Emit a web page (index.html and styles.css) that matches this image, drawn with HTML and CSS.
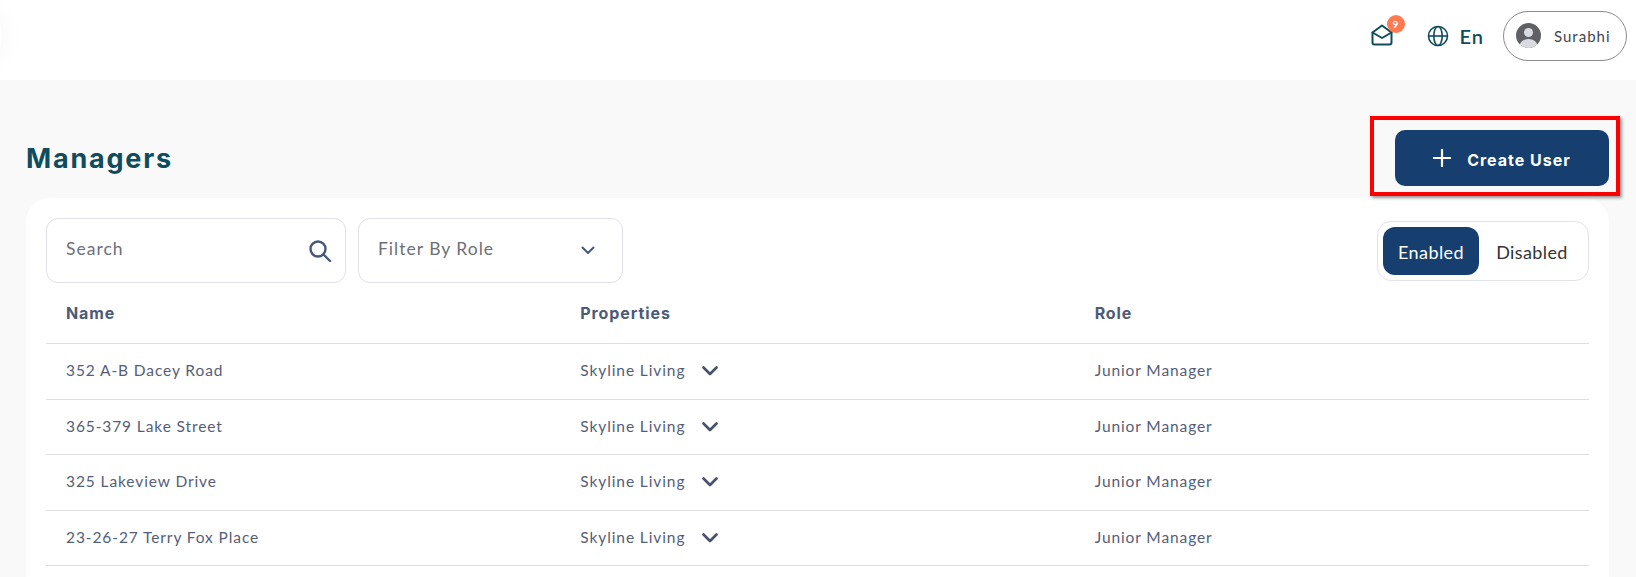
FILE: index.html
```html
<!DOCTYPE html>
<html lang="en">
<head>
<meta charset="UTF-8">
<meta name="viewport" content="width=device-width, initial-scale=1.0">
<title>Managers</title>
<link rel="stylesheet" href="styles.css">
</head>
<body>
<header class="topbar">
    <div class="logo-glow"></div>
    <div class="mail">
        <svg width="22" height="22" viewBox="0 0 22 22" fill="none" stroke="#0f4c5c" stroke-width="2" stroke-linejoin="round" stroke-linecap="round">
            <path d="M1.500 8.500 L11 1.500 L20.500 8.500 V18.500 a2 2 0 0 1 -2 2 H3.500 a2 2 0 0 1 -2 -2 Z"/>
            <path d="M1.500 8.500 L11 14 L20.500 8.500"/>
        </svg>
        <span class="badge">9</span>
    </div>
    <div class="lang">
        <svg width="22" height="22" viewBox="0 0 22 22" fill="none" stroke="#0f4c5c" stroke-width="1.600">
            <circle cx="11" cy="11" r="9.500"/>
            <ellipse cx="11" cy="11" rx="4.200" ry="9.500"/>
            <path d="M1.500 11 H20.500"/>
        </svg>
        <span>En</span>
    </div>
    <div class="user-pill">
        <svg width="25" height="25" viewBox="0 0 25 25">
            <defs><clipPath id="avatarClip"><circle cx="12.500" cy="12.500" r="12.500"/></clipPath></defs>
            <circle cx="12.500" cy="12.500" r="12.500" fill="#5f6065"/>
            <g clip-path="url(#avatarClip)" fill="#d8dbe2">
                <circle cx="12.500" cy="9.500" r="4.500"/>
                <ellipse cx="12.500" cy="23" rx="9" ry="7"/>
            </g>
        </svg>
        <span>Surabhi</span>
    </div>
</header>

<main class="content">
    <div class="title-row">
        <h1>Managers</h1>
        <button class="create-btn">
            <svg width="18" height="18" viewBox="0 0 18 18" stroke="#fff" stroke-width="2.200"><path d="M9 0 V18 M0 9 H18"/></svg>
            <span>Create User</span>
        </button>
        <div class="highlight"></div>
    </div>

    <section class="card">
        <div class="filters">
            <div class="field search">
                <span>Search</span>
                <svg width="24" height="24" viewBox="0 0 24 24" fill="none" stroke="#46587a" stroke-width="2.400" stroke-linecap="round"><circle cx="10" cy="10" r="7.500"/><path d="M15.500 15.500 L22 22"/></svg>
            </div>
            <div class="field role">
                <span>Filter By Role</span>
                <svg width="14" height="9" viewBox="0 0 14 9" fill="none" stroke="#46587a" stroke-width="2" stroke-linecap="round" stroke-linejoin="round"><path d="M1.500 1.500 L7 7 L12.500 1.500"/></svg>
            </div>
            <div class="toggle">
                <span class="toggle-on">Enabled</span>
                <span class="toggle-off">Disabled</span>
            </div>
        </div>

        <table class="managers">
            <thead>
                <tr><th>Name</th><th>Properties</th><th>Role</th></tr>
            </thead>
            <tbody>
                <tr>
                    <td>352 A-B Dacey Road</td>
                    <td><span class="prop">Skyline Living <svg width="16" height="10" viewBox="0 0 16 10" fill="none" stroke="#46506c" stroke-width="2.600" stroke-linecap="round" stroke-linejoin="round"><path d="M1.500 1.500 L8 8 L14.500 1.500"/></svg></span></td>
                    <td>Junior Manager</td>
                </tr>
                <tr>
                    <td>365-379 Lake Street</td>
                    <td><span class="prop">Skyline Living <svg width="16" height="10" viewBox="0 0 16 10" fill="none" stroke="#46506c" stroke-width="2.600" stroke-linecap="round" stroke-linejoin="round"><path d="M1.500 1.500 L8 8 L14.500 1.500"/></svg></span></td>
                    <td>Junior Manager</td>
                </tr>
                <tr>
                    <td>325 Lakeview Drive</td>
                    <td><span class="prop">Skyline Living <svg width="16" height="10" viewBox="0 0 16 10" fill="none" stroke="#46506c" stroke-width="2.600" stroke-linecap="round" stroke-linejoin="round"><path d="M1.500 1.500 L8 8 L14.500 1.500"/></svg></span></td>
                    <td>Junior Manager</td>
                </tr>
                <tr>
                    <td>23-26-27 Terry Fox Place</td>
                    <td><span class="prop">Skyline Living <svg width="16" height="10" viewBox="0 0 16 10" fill="none" stroke="#46506c" stroke-width="2.600" stroke-linecap="round" stroke-linejoin="round"><path d="M1.500 1.500 L8 8 L14.500 1.500"/></svg></span></td>
                    <td>Junior Manager</td>
                </tr>
            </tbody>
        </table>
    </section>
</main>
</body>
</html>
```

FILE: styles.css
```css
html, body { height: 100%; }
body {
    margin: 0; overflow: hidden; background: #f9f9fa;
    font-family: "Lato", "Noto Sans", sans-serif; color: #46587a;
}

/* top bar */
.topbar {
    position: relative; overflow: hidden;
    height: 80px; background: #fff; box-sizing: border-box;
    display: flex; align-items: center; justify-content: flex-end;
    padding: 0 9px 9px 0;
}
.logo-glow {
    position: absolute; left: -30px; top: 16px; width: 32px; height: 40px;
    border-radius: 50%; background: #fff;
    box-shadow: 0 0 20px 8px rgba(0,0,0,.025);
}
.mail { position: relative; display: flex; margin: -2px 34px 0 0; }
.badge {
    position: absolute; top: -9px; right: -12px;
    width: 18px; height: 18px; border-radius: 50%;
    background: #ff7a50; color: #fff; font-size: 10px; font-weight: 700;
    display: flex; align-items: center; justify-content: center;
}
.lang {
    display: flex; align-items: center; gap: 11px; margin-right: 19px;
    color: #0f4c5c; font-size: 20px; font-weight: 600; letter-spacing: 1px;
}
.user-pill {
    width: 124px; height: 50px; box-sizing: border-box;
    border: 1px solid #8a8a8a; border-radius: 25px;
    display: flex; align-items: center; gap: 13px; padding-left: 12px;
    font-size: 15px; letter-spacing: 1px; color: #44464f;
}

/* page title */
.content { padding: 50px 27px 0 26px; }
.title-row {
    position: relative; height: 68px;
    display: flex; align-items: flex-start; justify-content: space-between;
}
h1 {
    margin: 13px 0 0; font-family: "Inter", sans-serif;
    font-size: 27px; font-weight: 700; line-height: 32px; color: #0f4c5c;
    letter-spacing: 1.800px;
}
.create-btn {
    width: 214px; height: 56px; border: none; border-radius: 10px;
    background: #163f6f; color: #fff; cursor: pointer;
    font-family: "Inter", sans-serif; font-size: 16px; font-weight: 700; letter-spacing: 1px;
    display: flex; align-items: center; justify-content: center; gap: 16px;
    padding: 0;
}
.create-btn span { padding-top: 3px; }
.highlight {
    position: absolute; top: -14px; right: -11px; width: 250px; height: 80px;
    box-sizing: border-box; border: 4px solid #f00;
    box-shadow: 2px 2px 3px rgba(0,0,0,.4);
}

/* card */
.card {
    background: #fff; border-radius: 24px; padding: 20px 20px 0; height: 379px;
}
.filters { display: flex; align-items: center; gap: 12px; }
.field {
    height: 65px; box-sizing: border-box;
    border: 1px solid #dfe0e8; border-radius: 12px;
    display: flex; align-items: center; justify-content: space-between;
    font-size: 17.500px; letter-spacing: 1px; color: #6d6f78;
}
.field span { padding-bottom: 5px; }
.search { width: 300px; padding: 0 13px 0 19px; }
.role { width: 265px; padding: 0 27px 0 19px; }
.toggle {
    margin-left: auto; width: 212px; height: 60px; box-sizing: border-box;
    border: 1px solid #e2e3e8; border-radius: 14px; padding: 5px;
    display: flex; align-items: center;
    font-size: 18px; letter-spacing: .4px; color: #333;
}
.toggle-on {
    width: 96px; height: 48px; border-radius: 12px; background: #163f6f; color: #fff;
    display: flex; align-items: center; justify-content: center; padding-top: 2px; box-sizing: border-box;
}
.toggle-off { flex: 1; text-align: center; padding: 2px 0 0 2px; }

/* table */
.managers {
    width: 100%; border-collapse: collapse; table-layout: fixed;
}
.managers th {
    height: 60px; padding: 0 20px; text-align: left;
    font-family: "Inter", sans-serif; font-size: 16px; font-weight: 700; letter-spacing: .9px;
    color: #4c5a78; border-bottom: 1px solid #dedede;
}
.managers td {
    height: 55.500px; padding: 0 20px 2px; box-sizing: border-box; font-size: 15.500px; letter-spacing: .9px;
    color: #555e78; border-bottom: 1px solid #dedede;
}
.prop { display: inline-flex; align-items: center; gap: 17px; }
.prop svg { margin-top: 2px; }
```
